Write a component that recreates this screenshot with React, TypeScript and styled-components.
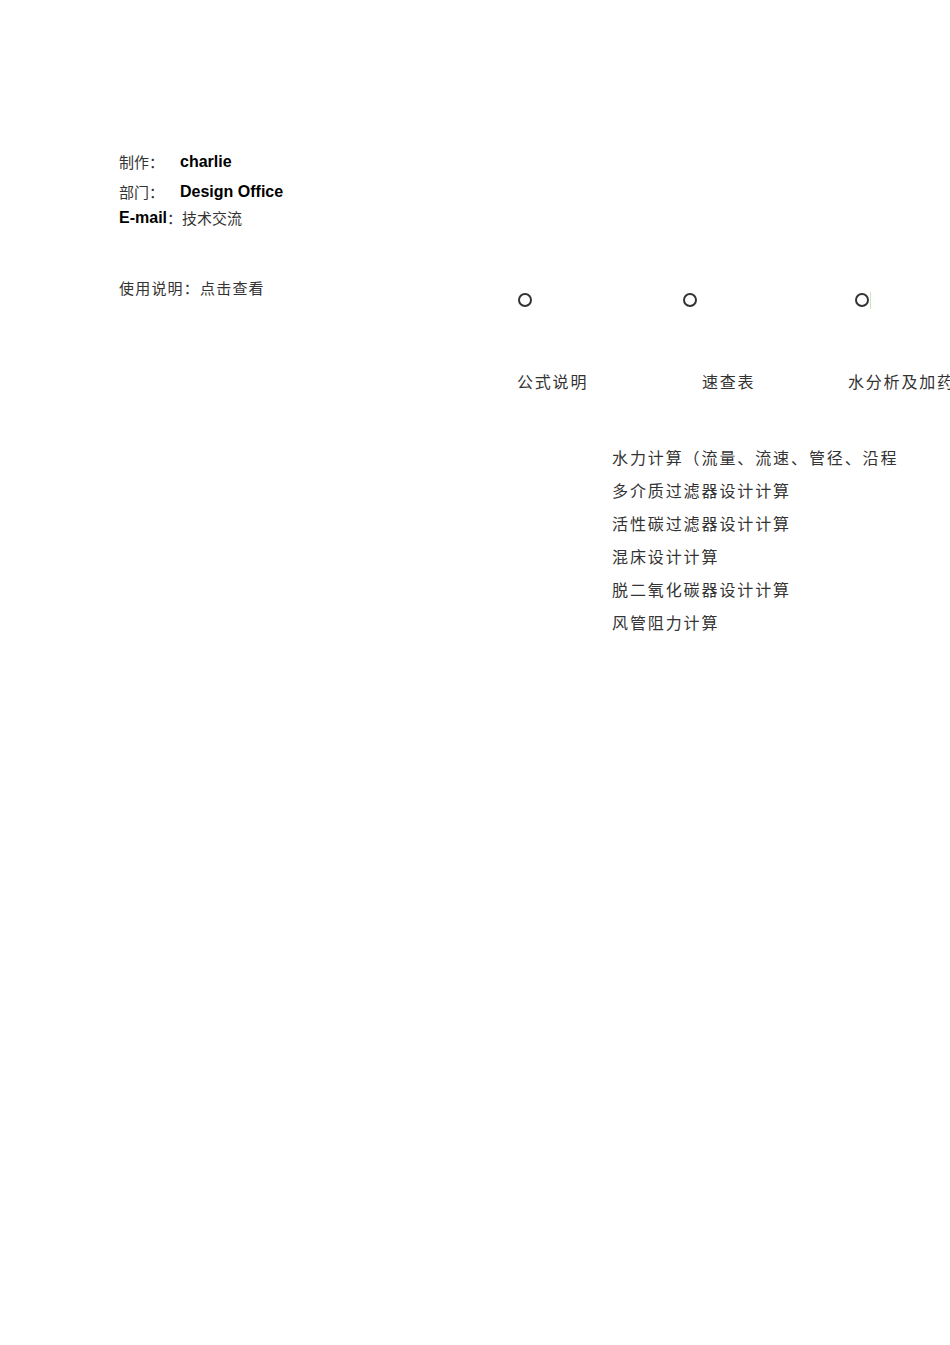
import React from 'react';
import styled, { createGlobalStyle } from 'styled-components';

const GlobalStyle = createGlobalStyle`
	html, body {
		margin: 0;
		padding: 0;
		background: #ffffff;
		overflow-x: hidden;
	}
	body {
		font-family: "Noto Sans CJK SC", "Liberation Sans", sans-serif;
		color: #2b2b2b;
	}
`;

const cjk = `"Noto Sans CJK SC", "Noto Sans CJK JP", sans-serif`;
const latin = `"Liberation Sans", Arial, sans-serif`;

const tabs = [
	{ label: '公式说明', dot: 1, text: 0 },
	{ label: '速查表', dot: 1, text: 20 },
	{ label: '水分析及加药', dot: 7, text: 0, marker: true },
];

const calcs = [
	'水力计算（流量、流速、管径、沿程',
	'多介质过滤器设计计算',
	'活性碳过滤器设计计算',
	'混床设计计算',
	'脱二氧化碳器设计计算',
	'风管阻力计算',
];

export default function App() {
	return (
		<>
			<GlobalStyle />
			<Page>
				<InfoColumn>
					<InfoRow $height={30}>
						<Label>制作：</Label>
						<Strong>charlie</Strong>
					</InfoRow>
					<InfoRow $height={30}>
						<Label>部门：</Label>
						<Strong>Design Office</Strong>
					</InfoRow>
					<InfoRow $height={22}>
						<Strong>E-mail</Strong>
						<Plain>：技术交流</Plain>
					</InfoRow>
					<Usage>使用说明：点击查看</Usage>
				</InfoColumn>

				<MenuPanel>
					<TabGrid>
						{tabs.map((t) => (
							<Tab key={t.label}>
								<DotRow $offset={t.dot}>
									<Dot />
									{t.marker && <Marker />}
								</DotRow>
								<TabLabel $offset={t.text}>{t.label}</TabLabel>
							</Tab>
						))}
					</TabGrid>
					<CalcList>
						{calcs.map((c) => (
							<CalcItem key={c}>{c}</CalcItem>
						))}
					</CalcList>
				</MenuPanel>
			</Page>
		</>
	);
}

const Page = styled.div`
	display: flex;
	align-items: flex-start;
	padding: 147px 0 0 119px;
	min-height: 1345px;
	box-sizing: border-box;
	white-space: nowrap;
`;

const InfoColumn = styled.div`
	width: 398px;
	flex-shrink: 0;
	display: flex;
	flex-direction: column;
`;

const InfoRow = styled.div<{ $height: number }>`
	display: flex;
	align-items: center;
	height: ${(p) => p.$height}px;
`;

const Label = styled.span`
	width: 61px;
	font-family: ${cjk};
	font-size: 15px;
	color: #333;
	margin-top: -1px;
`;

const Strong = styled.span`
	font-family: ${latin};
	font-weight: bold;
	font-size: 16px;
	color: #000;
`;

const Plain = styled.span`
	font-family: ${cjk};
	font-size: 15px;
	color: #333;
	margin-top: -1px;
`;

const Usage = styled.div`
	margin-top: 46px;
	font-family: ${cjk};
	font-size: 15px;
	letter-spacing: 1.2px;
	line-height: 26px;
	color: #333;
`;

const MenuPanel = styled.div`
	display: flex;
	flex-direction: column;
	padding-top: 146px;
`;

const TabGrid = styled.div`
	display: grid;
	grid-template-columns: 165px 166px 165px;
`;

const Tab = styled.div`
	display: flex;
	flex-direction: column;
`;

const DotRow = styled.div<{ $offset: number }>`
	display: flex;
	align-items: center;
	height: 14px;
	padding-left: ${(p) => p.$offset}px;
`;

const Dot = styled.span`
	width: 10px;
	height: 10px;
	border: 2px solid #333;
	border-radius: 50%;
`;

const Marker = styled.span`
	width: 1px;
	height: 17px;
	margin-left: 1px;
	background: #c8e6c0;
`;

const TabLabel = styled.div<{ $offset: number }>`
	margin-top: 62px;
	padding-left: ${(p) => p.$offset}px;
	font-family: ${cjk};
	font-size: 16px;
	letter-spacing: 1.8px;
	line-height: 24px;
	color: #333;
`;

const CalcList = styled.ul`
	list-style: none;
	margin: 48px 0 0 95px;
	padding: 0;
`;

const CalcItem = styled.li`
	font-family: ${cjk};
	font-size: 16px;
	letter-spacing: 1.9px;
	line-height: 33px;
	color: #333;
`;
